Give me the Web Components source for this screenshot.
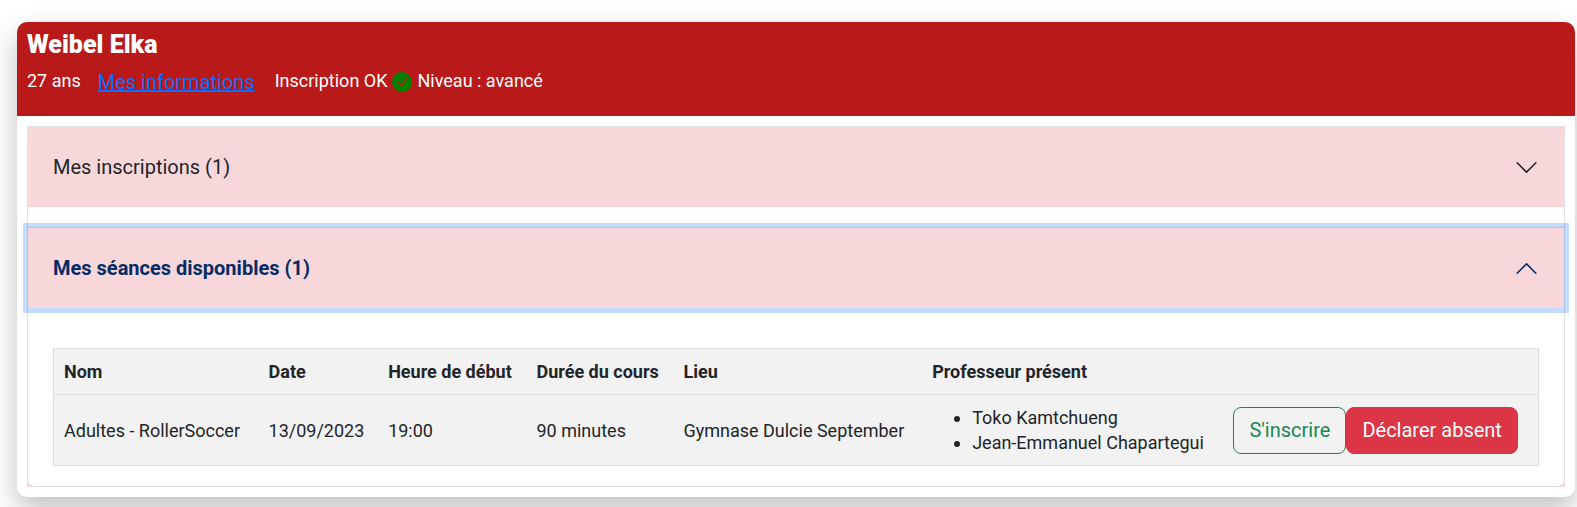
<!DOCTYPE html>
<html lang="fr">
<head>
<meta charset="utf-8">
<title>Mes séances</title>
<style>
body { margin: 0; padding: 22px 2px 10px 17px; background: #fff; color: #212529; font: 18px/25px Roboto, sans-serif; overflow: hidden; }
</style>
</head>
<body>
<member-card>
  <member-header slot="header" name="Weibel Elka" age="27 ans" level="Niveau : avancé"></member-header>
  <accordion-group>
    <accordion-panel heading="Mes inscriptions (1)"></accordion-panel>
    <accordion-panel heading="Mes séances disponibles (1)" open>
      <session-table></session-table>
    </accordion-panel>
  </accordion-group>
</member-card>
<script>
const define = (name, html, setup) => customElements.define(name, class extends HTMLElement {
  connectedCallback() {
    if (this.shadowRoot) return;
    const template = document.createElement('template');
    template.innerHTML = html;
    this.attachShadow({ mode: 'open' }).append(template.content.cloneNode(true));
    if (setup) setup(this, this.shadowRoot);
  }
});

define('member-card', `
<style>
:host { display: block; border-radius: 10px; background: #fff; box-shadow: 0 12px 28px rgba(0,0,0,.25); }
.body { padding: 10px; }
</style>
<slot name="header"></slot>
<div class="body"><slot></slot></div>`);

define('check-badge', `
<style>
:host { display: inline-flex; width: 20px; height: 20px; border-radius: 50%; background: green; }
svg { width: 20px; height: 20px; }
</style>
<svg viewBox="0 0 20 20" fill="none" stroke="#ba1919" stroke-width="1.5" aria-hidden="true"><path d="M5.3 9.8 9 13.4 14.9 6.6"/></svg>`);

define('member-header', `
<style>
:host { display: block; padding: 8px 10px 16px; border-radius: 10px 10px 0 0; background: #ba1919; color: #fff; }
h2 { margin: 0; font-size: 25px; line-height: 30px; font-weight: 900; }
.row { display: flex; align-items: center; height: 40px; }
a { margin: 4px 20px 0 17px; font-size: 20px; color: #0d6efd; text-decoration: underline; }
check-badge { margin: 4px 5px 0; }
</style>
<h2></h2>
<div class="row"><span class="age"></span><a href="#informations">Mes informations</a><span>Inscription OK</span><check-badge></check-badge><span class="level"></span></div>`,
(host, root) => {
  root.querySelector('h2').textContent = host.getAttribute('name');
  root.querySelector('.age').textContent = host.getAttribute('age');
  root.querySelector('.level').textContent = host.getAttribute('level');
});

define('accordion-group', `
<style>
:host { display: block; background: #f8d7da; }
.frame { display: flex; flex-direction: column; gap: 20px; border: 1px solid #dee2e6; border-radius: 8px; background: #fff; }
::slotted(:first-child) { --edge: 0; --corner: 7px; }
</style>
<div class="frame"><slot></slot></div>`);

define('accordion-panel', `
<style>
:host { display: block; border-top: var(--edge, 1px) solid #dee2e6; }
h3 { margin: 0; }
button { display: flex; align-items: center; justify-content: space-between; box-sizing: border-box; width: 100%; height: 80px; margin: 0; padding: 0 25px; border: 0; border-radius: var(--corner, 0) var(--corner, 0) 0 0; background: #f8d7da; color: #212529; font: 400 20px/30px Roboto, sans-serif; text-align: left; }
:host([open]) button { font-weight: 700; color: #052c65; box-shadow: 0 0 0 5px rgba(13,110,253,.25); }
svg { width: 25px; height: 25px; }
:host([open]) svg { transform: rotate(180deg); }
.content { display: none; padding: 40px 25px 20px; }
:host([open]) .content { display: block; }
</style>
<h3><button type="button" aria-controls="content"><span></span><svg viewBox="0 0 16 16" fill="currentColor" aria-hidden="true"><path fill-rule="evenodd" d="M1.646 4.646a.5.5 0 0 1 .708 0L8 10.293l5.646-5.647a.5.5 0 0 1 .708.708l-6 6a.5.5 0 0 1-.708 0l-6-6a.5.5 0 0 1 0-.708z"/></svg></button></h3>
<div class="content" id="content"><slot></slot></div>`,
(host, root) => {
  const button = root.querySelector('button');
  root.querySelector('span').textContent = host.getAttribute('heading');
  button.setAttribute('aria-expanded', host.hasAttribute('open'));
  button.addEventListener('click', () => button.setAttribute('aria-expanded', host.toggleAttribute('open')));
});

define('action-button', `
<style>
:host { display: block; }
button { box-sizing: border-box; height: 47px; padding: 0 15px; border: 1px solid #198754; border-radius: 8px; background: transparent; color: #198754; font: 400 20px/30px Roboto, sans-serif; white-space: nowrap; }
:host([kind=danger]) button { border-color: #dc3545; background: #dc3545; color: #fff; }
</style>
<button type="button"><slot></slot></button>`);

define('session-table', `
<style>
:host { display: block; }
table { width: 100%; border-collapse: collapse; border: 1px solid #dcdddf; background: #f2f2f2; color: #212529; }
th, td { padding: 10px; text-align: left; vertical-align: middle; white-space: nowrap; }
th:first-child, td:first-child { padding-right: 12px; }
th { font-weight: 700; }
tr { border-bottom: 1px solid #dcdddf; }
ul { margin: 0; padding-left: 40px; }
.actions { display: flex; }
</style>
<table>
<thead><tr><th>Nom</th><th>Date</th><th>Heure de début</th><th>Durée du cours</th><th>Lieu</th><th>Professeur présent</th><th></th></tr></thead>
<tbody><tr><td>Adultes - RollerSoccer</td><td>13/09/2023</td><td>19:00</td><td>90 minutes</td><td>Gymnase Dulcie September</td>
<td><ul><li>Toko Kamtchueng</li><li>Jean-Emmanuel Chapartegui</li></ul></td>
<td><div class="actions"><action-button>S'inscrire</action-button><action-button kind="danger">Déclarer absent</action-button></div></td></tr></tbody>
</table>`);
</script>
</body>
</html>
